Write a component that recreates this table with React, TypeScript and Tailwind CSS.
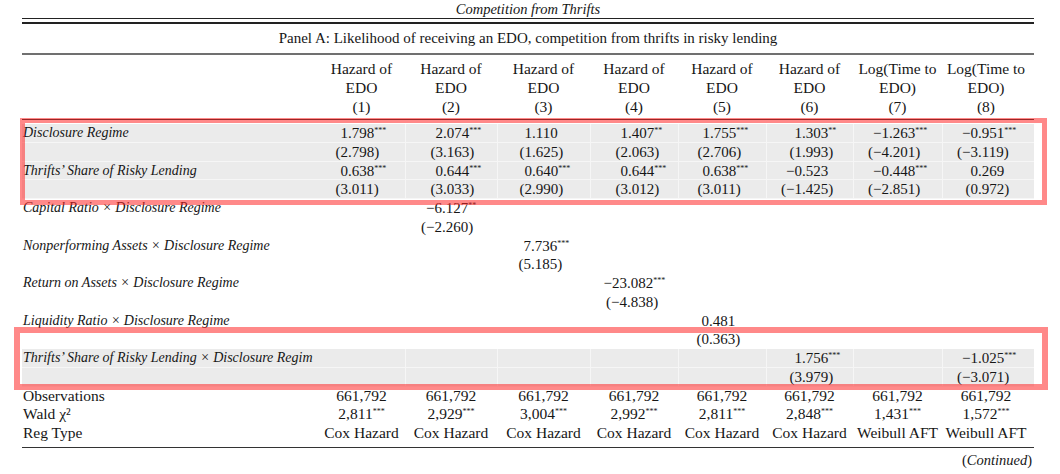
import React from 'react';

const GRID = 'grid grid-cols-[296px_87px_92px_93px_88px_88px_87px_89px_88px]';
// where the decimal point sits inside each column
const OFF = ['w-[30px]', 'w-[37px]', 'w-[34px]', 'w-[37px]', 'w-[31px]', 'w-[35px]', 'w-[35px]', 'w-[35px]'];

type Cells = (string | null)[];

type Row = {
  label?: string;
  italic?: boolean;
  cells: Cells;
  gray?: boolean;
  center?: boolean;
};

const e = (n: number, v: string): Cells => Array.from({ length: 8 }, (_, i) => (i === n ? v : null));

const rows: Row[] = [
  {
    label: 'Disclosure Regime',
    italic: true,
    gray: true,
    cells: ['1.798***', '2.074***', '1.110', '1.407**', '1.755***', '1.303**', '−1.263***', '−0.951***'],
  },
  { gray: true, cells: ['(2.798)', '(3.163)', '(1.625)', '(2.063)', '(2.706)', '(1.993)', '(−4.201)', '(−3.119)'] },
  {
    label: 'Thrifts’ Share of Risky Lending',
    italic: true,
    gray: true,
    cells: ['0.638***', '0.644***', '0.640***', '0.644***', '0.638***', '−0.523', '−0.448***', '0.269'],
  },
  { gray: true, cells: ['(3.011)', '(3.033)', '(2.990)', '(3.012)', '(3.011)', '(−1.425)', '(−2.851)', '(0.972)'] },
  { label: 'Capital Ratio × Disclosure Regime', italic: true, cells: e(1, '−6.127**') },
  { cells: e(1, '(−2.260)') },
  { label: 'Nonperforming Assets × Disclosure Regime', italic: true, cells: e(2, '7.736***') },
  { cells: e(2, '(5.185)') },
  { label: 'Return on Assets × Disclosure Regime', italic: true, cells: e(3, '−23.082***') },
  { cells: e(3, '(−4.838)') },
  { label: 'Liquidity Ratio × Disclosure Regime', italic: true, cells: e(4, '0.481') },
  { cells: e(4, '(0.363)') },
  {
    label: 'Thrifts’ Share of Risky Lending × Disclosure Regim',
    italic: true,
    gray: true,
    cells: [null, null, null, null, null, '1.756***', null, '−1.025***'],
  },
  { gray: true, cells: [null, null, null, null, null, '(3.979)', null, '(−3.071)'] },
  { label: 'Observations', center: true, cells: Array(8).fill('661,792') },
  {
    label: 'Wald χ²',
    center: true,
    cells: ['2,811***', '2,929***', '3,004***', '2,992***', '2,811***', '2,848***', '1,431***', '1,572***'],
  },
  {
    label: 'Reg Type',
    center: true,
    cells: ['Cox Hazard', 'Cox Hazard', 'Cox Hazard', 'Cox Hazard', 'Cox Hazard', 'Cox Hazard', 'Weibull AFT', 'Weibull AFT'],
  },
];

function split(v: string) {
  const m = v.match(/^(.*?)(\**)$/);
  return { body: m ? m[1] : v, stars: m ? m[2] : '' };
}

function Stars({ s }: { s: string }) {
  if (!s) return null;
  return <sup className="text-[8px] -top-[5px]">{s}</sup>;
}

function Num({ v, col }: { v: string; col: number }) {
  const { body, stars } = split(v);
  const dot = body.indexOf('.');
  const head = dot >= 0 ? body.slice(0, dot) : body;
  const tail = dot >= 0 ? body.slice(dot) : '';
  return (
    <div className="flex whitespace-nowrap text-[15px]">
      <span className={`${OFF[col]} shrink-0 text-right`}>{head}</span>
      <span>
        {tail}
        <Stars s={stars} />
      </span>
    </div>
  );
}

function Centered({ v }: { v: string }) {
  const { body, stars } = split(v);
  return (
    <div className="text-center whitespace-nowrap text-[15.5px]">
      {body}
      <Stars s={stars} />
    </div>
  );
}

const header = [
  ['Hazard of', 'EDO', '(1)'],
  ['Hazard of', 'EDO', '(2)'],
  ['Hazard of', 'EDO', '(3)'],
  ['Hazard of', 'EDO', '(4)'],
  ['Hazard of', 'EDO', '(5)'],
  ['Hazard of', 'EDO', '(6)'],
  ['Log(Time to', 'EDO)', '(7)'],
  ['Log(Time to', 'EDO)', '(8)'],
];

export default function App() {
  return (
    <div className="relative w-[1060px] h-[474px] overflow-hidden bg-white text-[#161616] font-['Liberation_Serif',serif]">
      <div className="ml-[22px] w-[1012px]">
        {/* title + top double rule */}
        <div className="h-[18px] pt-px text-center italic text-[14.5px] leading-[16px]">Competition from Thrifts</div>
        <div className="h-px bg-[#222]" />
        <div className="mt-[3px] h-[1.5px] bg-[#222]" />
        <div className="h-[29px] text-center text-[15px] leading-[29px]">
          Panel A: Likelihood of receiving an EDO, competition from thrifts in risky lending
        </div>
        <div className="h-[2px] bg-[#707070]" />

        {/* column heads */}
        <div className="pt-[4.5px]">
          {[0, 1, 2].map((r) => (
            <div key={r} className={`${GRID} h-[19px] leading-[19px] text-[15.5px]`}>
              <div />
              {header.map((h, i) => (
                <div key={i} className="text-center whitespace-nowrap">
                  {h[r]}
                </div>
              ))}
            </div>
          ))}
        </div>
        <div className="mt-[3px] h-px bg-[#222]" />

        {/* body */}
        <div className="mt-[4px]">
          {rows.map((row, ri) => (
            <div
              key={ri}
              className={`${GRID} h-[18.75px] leading-[18.75px] ${row.gray ? 'bg-[#ebebeb] border-b border-[#f6f6f6]' : ''}`}
            >
              <div
                className={`pl-px overflow-hidden whitespace-nowrap ${row.italic ? 'italic text-[14px]' : 'text-[15.5px]'}`}
              >
                {row.label}
              </div>
              {row.cells.map((c, ci) => (
                <div key={ci} className={row.gray && ci > 0 ? 'border-l border-[#f6f6f6]' : ''}>
                  {c && (row.center ? <Centered v={c} /> : <Num v={c} col={ci} />)}
                </div>
              ))}
            </div>
          ))}
        </div>
        <div className="mt-[4px] h-[1.5px] bg-[#333]" />

        <div className="mt-[3px] h-[18px] leading-[18px] pr-[2px] text-right text-[14.5px]">
          (<span className="italic">Continued</span>)
        </div>
      </div>

      {/* highlight boxes drawn over the table */}
      <div className="absolute left-[20px] top-[118px] w-[1027px] h-[87px] border-[5px] border-[rgba(255,40,40,0.55)]" />
      <div className="absolute left-[14px] top-[327px] w-[1034px] h-[63px] border-[6px] border-[rgba(255,40,40,0.55)]" />
    </div>
  );
}
